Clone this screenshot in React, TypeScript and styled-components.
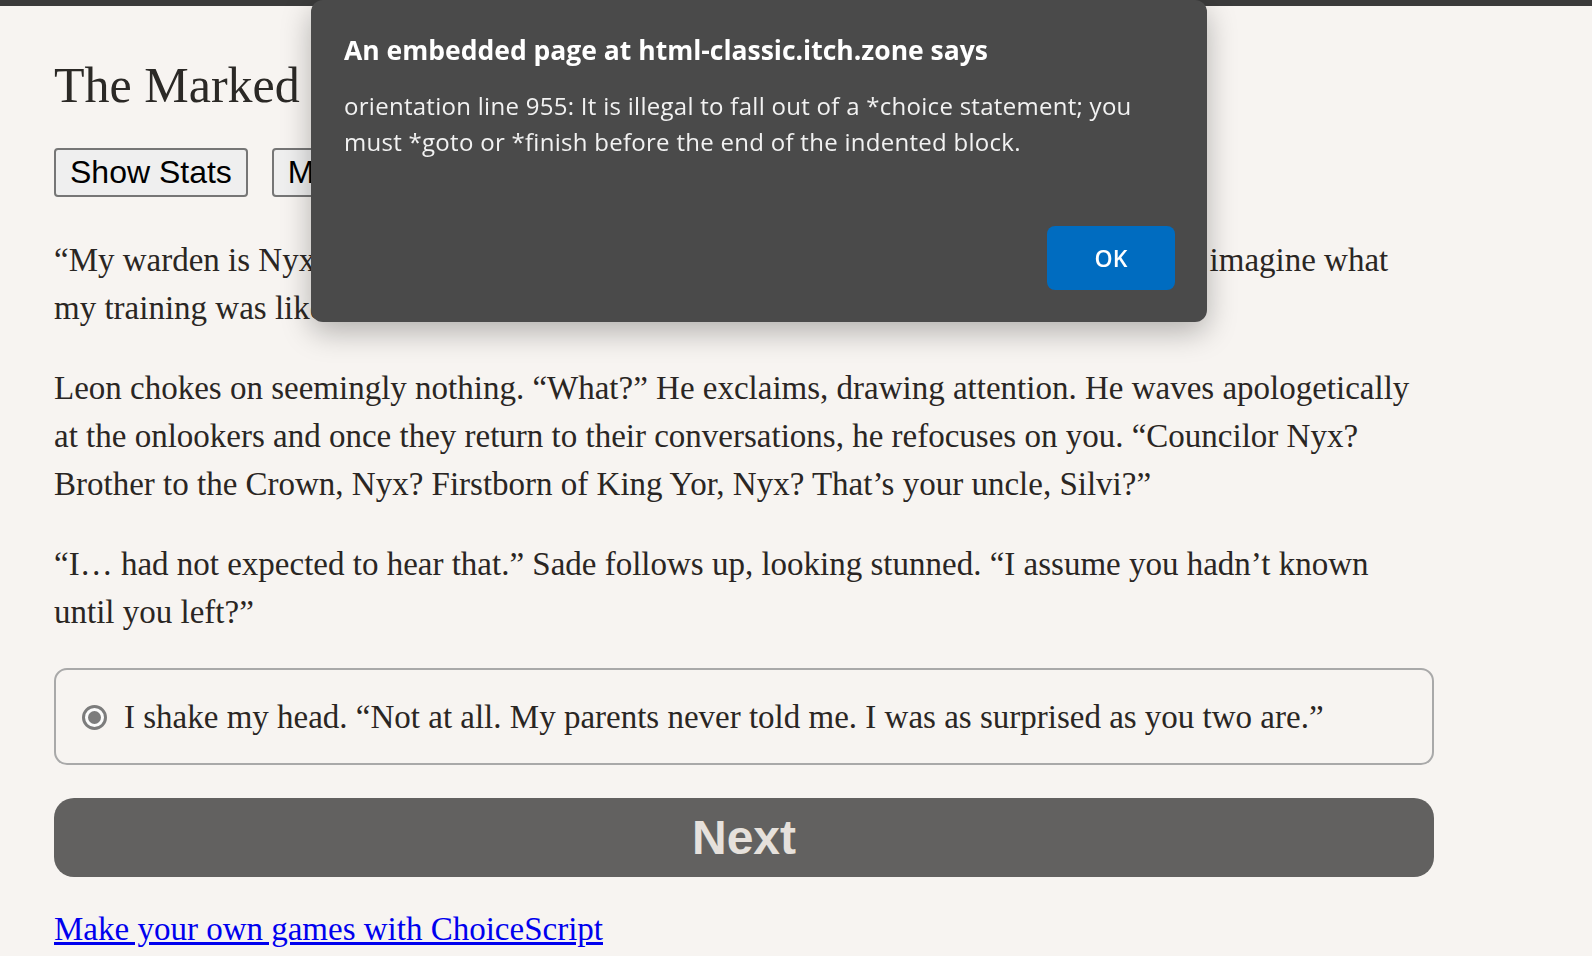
import * as React from 'react';
import styled, { createGlobalStyle } from 'styled-components';

const GlobalStyle = createGlobalStyle`
  html, body {
    margin: 0;
    padding: 0;
    background: #f7f4f1;
  }
  body {
    font-family: "Liberation Serif", "Times New Roman", serif;
    color: #2a2623;
  }
`;

const TopBar = styled.div`
  height: 6px;
  background: #3b3b3b;
`;

const Page = styled.main`
  width: 1380px;
  padding: 0 0 0 54px;
`;

const Title = styled.h1`
  margin: 51px 0 0;
  font-size: 50px;
  line-height: 56px;
  font-weight: normal;
  color: #2b2926;
`;

const Toolbar = styled.div`
  display: flex;
  gap: 24px;
  margin-top: 35px;
`;

const ToolButton = styled.button`
  height: 49px;
  padding: 0 14px;
  border: 2px solid #767676;
  border-radius: 4px;
  background: #efefef;
  color: #000;
  font-family: "Liberation Sans", Arial, sans-serif;
  font-size: 32px;
`;

const Paragraph = styled.p`
  margin: 0 0 32px;
  font-size: 33px;
  line-height: 48px;
  &:first-of-type {
    margin-top: 39px;
  }
`;

const ChoiceBox = styled.label`
  display: flex;
  align-items: center;
  gap: 17px;
  margin-top: 30px;
  padding: 23px 26px 22px;
  border: 2px solid #a9a9a9;
  border-radius: 13px;
  font-size: 33px;
  line-height: 48px;
`;

const Radio = styled.span`
  flex: none;
  box-sizing: border-box;
  width: 25px;
  height: 25px;
  border: 3px solid #7c7c7c;
  border-radius: 50%;
  display: flex;
  align-items: center;
  justify-content: center;
  background: #fbfbfb;
  &::after {
    content: '';
    width: 13px;
    height: 13px;
    border-radius: 50%;
    background: #7c7c7c;
  }
`;

const NextButton = styled.button`
  display: block;
  width: 100%;
  height: 79px;
  margin-top: 33px;
  border: none;
  border-radius: 20px;
  background: #626160;
  color: #e6e1dc;
  font-family: "Liberation Sans", Arial, sans-serif;
  font-weight: bold;
  font-size: 48px;
`;

const Footer = styled.p`
  margin: 28px 0 0;
  font-size: 33px;
  line-height: 48px;
  a {
    color: #0000ee;
  }
`;

const Dialog = styled.div`
  position: fixed;
  left: 311px;
  top: 0;
  width: 896px;
  height: 322px;
  box-sizing: border-box;
  padding: 32px 32px 32px 33px;
  display: flex;
  flex-direction: column;
  background: #4a4a4a;
  border-radius: 12px;
  box-shadow: 0 10px 30px rgba(0, 0, 0, 0.28);
  color: #fff;
  font-family: "Open Sans", Lato, sans-serif;
`;

const DialogTitle = styled.div`
  font-weight: bold;
  font-size: 26.5px;
  line-height: 36px;
`;

const DialogMessage = styled.div`
  margin-top: 20px;
  font-size: 24px;
  letter-spacing: 0.28px;
  line-height: 36px;
  color: #f2f2f2;
`;

const DialogActions = styled.div`
  margin-top: auto;
  display: flex;
  justify-content: flex-end;
`;

const OkButton = styled.button`
  width: 128px;
  height: 64px;
  border: none;
  border-radius: 8px;
  background: #006cc0;
  color: #fff;
  font-family: "Open Sans", Lato, sans-serif;
  font-weight: 600;
  font-size: 23px;
`;

export default function App() {
  return (
    <>
      <GlobalStyle />
      <TopBar />
      <Page>
        <Title>The Marked</Title>
        <Toolbar>
          <ToolButton>Show Stats</ToolButton>
          <ToolButton>Menu</ToolButton>
        </Toolbar>
        <Paragraph>
          “My warden is Nyx. Councilor Nyx, my father’s eldest brother, so I’m sure you can all imagine what
          my training was like.”
        </Paragraph>
        <Paragraph>
          Leon chokes on seemingly nothing. “What?” He exclaims, drawing attention. He waves apologetically
          at the onlookers and once they return to their conversations, he refocuses on you. “Councilor Nyx?
          Brother to the Crown, Nyx? Firstborn of King Yor, Nyx? That’s your uncle, Silvi?”
        </Paragraph>
        <Paragraph>
          “I… had not expected to hear that.” Sade follows up, looking stunned. “I assume you hadn’t known
          until you left?”
        </Paragraph>
        <ChoiceBox>
          <Radio />
          I shake my head. “Not at all. My parents never told me. I was as surprised as you two are.”
        </ChoiceBox>
        <NextButton>Next</NextButton>
        <Footer>
          <a href="#">Make your own games with ChoiceScript</a>
        </Footer>
      </Page>
      <Dialog>
        <DialogTitle>An embedded page at html-classic.itch.zone says</DialogTitle>
        <DialogMessage>
          orientation line 955: It is illegal to fall out of a *choice statement; you must *goto or
          *finish before the end of the indented block.
        </DialogMessage>
        <DialogActions>
          <OkButton>OK</OkButton>
        </DialogActions>
      </Dialog>
    </>
  );
}
